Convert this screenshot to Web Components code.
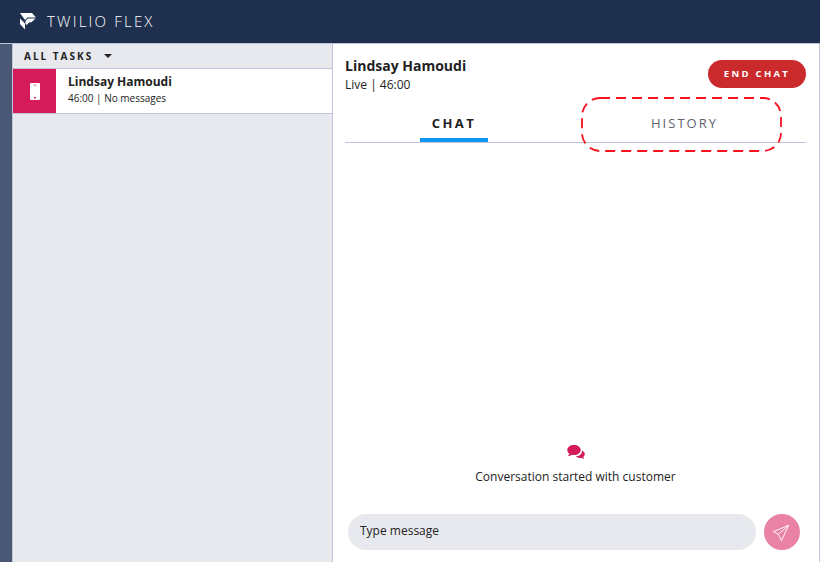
<!DOCTYPE html>
<html lang="en"><head><meta charset="utf-8"><title>Twilio Flex</title>
<style>
html,body{margin:0;padding:0;height:100%;overflow:hidden;background:#fff}
body{font-family:"Open Sans",sans-serif;color:#222}
</style></head><body>
<flex-app>
  <flex-header slot="header">TWILIO FLEX</flex-header>
  <task-list slot="list" title-text="ALL TASKS">
    <task-row name="Lindsay Hamoudi" meta="46:00 | No messages"></task-row>
  </task-list>
  <chat-panel slot="main" name="Lindsay Hamoudi" status="Live | 46:00"></chat-panel>
</flex-app>
<script>
function def(name, html){
  customElements.define(name, class extends HTMLElement{
    connectedCallback(){
      if(this.shadowRoot) return;
      const s=this.attachShadow({mode:'open'});
      s.innerHTML=typeof html==='function'?html(this):html;
    }
  });
}
def('flex-app',`<style>
:host{display:grid;grid-template-columns:12px 321px 1fr;grid-template-rows:44px 1fr;height:562px;width:820px}
.h{grid-column:1/-1;grid-row:1}
.rail{background:#4a5875;grid-row:2;grid-column:1}
.l{grid-row:2;grid-column:2;min-height:0;display:flex}
.m{grid-row:2;grid-column:3;min-height:0;display:flex}
::slotted(*){flex:1}
</style><div class="h"><slot name="header"></slot></div><div class="rail"></div><div class="l"><slot name="list"></slot></div><div class="m"><slot name="main"></slot></div>`);
def('flex-header',`<style>
:host{display:flex;align-items:center;box-sizing:border-box;height:44px;background:#1f304f;border-bottom:1px solid #c0c4d6;padding-left:20px;gap:11px;color:#fff;font:300 15px/1 "Open Sans",sans-serif;letter-spacing:2.2px}
svg{display:block}
</style><svg width="16" height="17" viewBox="0 0 16 17"><path fill="#fff" d="M0 0H12L16 4.500H7.500L5 7Z"/><path fill="#fff" d="M7.800 5.500H15.500L11.500 9.300H9.500L6.600 12 5.300 10.500 5.800 7.500Z"/><path fill="#fff" d="M0 5.500 5 10.500V16.500L0 11Z"/></svg><span><slot></slot></span>`);
def('task-list',h=>`<style>
:host{display:block;box-sizing:border-box;background:#e8e9ee;border-left:1px solid #c0c4d6;border-right:1px solid #c0c4d6}
.t{display:flex;align-items:center;height:25px;box-sizing:border-box;padding:0 0 0 11px;font:700 10px/1 "Open Sans",sans-serif;letter-spacing:2px;color:#222;border-bottom:1px solid #c0c4d6}
.c{width:0;height:0;margin-left:11px;border:4.500px solid transparent;border-top:4px solid #222;border-bottom:0}
</style><div class="t">${h.getAttribute('title-text')}<i class="c"></i></div><slot></slot>`);
def('task-row',h=>`<style>
:host{display:flex;height:44px;background:#fff;border-bottom:1px solid #c0c4d6;font-family:"Open Sans",sans-serif;color:#222}
.i{width:43px;background:#d51b5a;display:flex;align-items:center;justify-content:center}
svg{display:block}
.x{padding:4px 0 0 12px}
.n{font:700 12px/17px "Open Sans",sans-serif}
.s{font:400 10px/14px "Open Sans",sans-serif;margin-top:1px}
</style><div class="i"><svg width="10" height="17" viewBox="0 0 10 17"><path fill="#fff" d="M1 0H9A1 1 0 0 1 10 1V16A1 1 0 0 1 9 17H1A1 1 0 0 1 0 16V1A1 1 0 0 1 1 0Z"/><rect x="3.500" y="1.200" width="3" height="2" fill="#eeb0c6"/><rect x="4" y="14" width="2" height="1.400" fill="#d51b5a"/></svg></div><div class="x"><div class="n">${h.getAttribute('name')}</div><div class="s">${h.getAttribute('meta')}</div></div>`);
def('tab-item',h=>`<style>
:host{flex:1;display:flex;flex-direction:column;align-items:center;position:relative;height:44px;box-sizing:border-box;padding-top:16px;font:400 13px/18px "Open Sans",sans-serif;letter-spacing:2px;color:#606370}
:host([active]){font-weight:700;color:#222;letter-spacing:2.4px}
:host([active]) i{position:absolute;bottom:0;left:50%;margin-left:-34px;width:68px;height:4px;background:#0c97f2}
</style><slot></slot><i></i>`);
def('end-button',`<style>
:host{display:flex;align-items:center;justify-content:center;width:98px;height:28px;border-radius:14px;background:#cb2a2c;color:#fff;font:700 9.500px/1 "Open Sans",sans-serif;letter-spacing:2.300px}
</style><slot></slot>`);
def('chat-panel',h=>`<style>
:host{display:flex;flex-direction:column;box-sizing:border-box;background:#fff;border-right:1px solid #c0c4d6;padding:0 13px 0 12px;font-family:"Open Sans",sans-serif;color:#222;position:relative;min-height:0}
.top{display:flex;justify-content:space-between;height:54px}
.n{font:700 14px/19px "Open Sans",sans-serif;margin-top:12px}
.s{font:400 12px/17px "Open Sans",sans-serif;margin-top:1px}
end-button{margin-top:16px}
.tabs{display:flex;border-bottom:1px solid #c0c4d6;height:45px;box-sizing:border-box;position:relative}
.tabs tab-item:first-child{flex:0 0 218px}
.tabs tab-item:last-child{flex:0 0 243px}
.dash{position:absolute;left:248px;top:53px;pointer-events:none}
.body{flex:1;display:flex;flex-direction:column;align-items:center;justify-content:flex-end;padding-bottom:29px;font:400 12px/17px "Open Sans",sans-serif}
.body svg{margin-bottom:7px}
.in{display:flex;align-items:center;gap:8px;padding:0 6px 0 3px;height:36px;margin-bottom:12px}
.box{flex:1;height:36px;border-radius:18px;background:#e8e9ee;display:flex;align-items:center;padding:0 0 2px 12px;box-sizing:border-box;font:400 12px/1 "Open Sans",sans-serif;color:#222}
.send{width:36px;height:36px;border-radius:50%;background:#ea82a6;display:flex;align-items:center;justify-content:center}
</style>
<div class="top"><div><div class="n">${h.getAttribute('name')}</div><div class="s">${h.getAttribute('status')}</div></div><end-button>END CHAT</end-button></div>
<div class="tabs"><tab-item active>CHAT</tab-item><tab-item>HISTORY</tab-item></div>
<svg class="dash" width="202" height="56" viewBox="0 0 202 56"><rect x="1" y="1" width="199" height="53" rx="18" fill="none" stroke="#f8101c" stroke-width="1.800" stroke-dasharray="10 6"/></svg>
<div class="body"><svg width="18" height="16" viewBox="0 0 18 16"><path fill="#d51b5a" d="M7 0C3.200 0 .3 2.100.3 5c0 1.500.8 2.800 2 3.700-.2.9-.8 1.700-1.400 2.400 1.400-.1 2.800-.7 3.800-1.400.7.2 1.500.3 2.300.3 3.800 0 6.700-2.100 6.700-5S10.800 0 7 0Z"/><path fill="#d51b5a" d="M15 5.500c1.700.7 2.800 2 2.800 3.500 0 1.100-.6 2.100-1.500 2.800.1.800.6 1.500 1.200 2.200-1.100-.1-2.300-.6-3.100-1.300-.5.1-1 .2-1.600.2-1.600 0-3-.5-4-1.300 3.300-.2 6.200-2.300 6.200-5.500Z"/></svg>Conversation started with customer</div>
<div class="in"><div class="box">Type message</div><div class="send"><svg width="18" height="18" viewBox="0 0 20 20" style="position:relative;top:1px;left:-1px"><path fill="none" stroke="#fff" stroke-width="1" stroke-linejoin="round" d="M18.500 1.500 1.500 8.500 7 11.500 10.500 18.500ZM18.500 1.500 7 11.500"/></svg></div></div>`);
</script></body></html>
